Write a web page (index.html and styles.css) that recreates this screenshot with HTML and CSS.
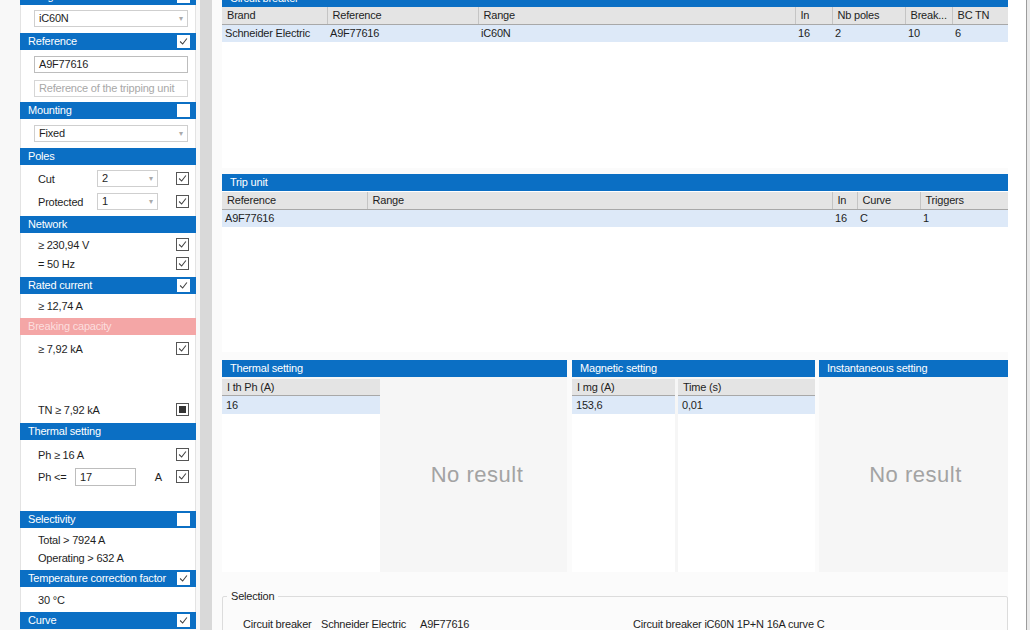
FILE: index.html
```html
<!DOCTYPE html>
<html lang="en">
<head>
    <meta charset="UTF-8">
    <title>Circuit breaker selection</title>
    <link rel="stylesheet" href="styles.css">
</head>
<body>
    <div class="sidebar">
        <div class="sec-head">Range<span class="cb white"></span></div>
        <div class="sec-body b-range">
            <div class="combo">iC60N<span class="arrow">&#9662;</span></div>
        </div>

        <div class="sec-head">Reference<span class="cb white checked"><svg viewBox="0 0 13 13"><polyline points="2.5,6.5 5.5,9.5 10.5,3"/></svg></span></div>
        <div class="sec-body b-ref">
            <div class="text-input">A9F77616</div>
            <div class="text-input placeholder">Reference of the tripping unit</div>
        </div>

        <div class="sec-head">Mounting<span class="cb white"></span></div>
        <div class="sec-body b-mount">
            <div class="combo">Fixed<span class="arrow">&#9662;</span></div>
        </div>

        <div class="sec-head">Poles</div>
        <div class="sec-body b-poles">
            <div class="pole-row">
                <span class="pole-label">Cut</span>
                <div class="combo small">2<span class="arrow">&#9662;</span></div>
                <span class="cb"><svg viewBox="0 0 13 13"><polyline points="2.5,6.5 5.5,9.5 10.5,3"/></svg></span>
            </div>
            <div class="pole-row">
                <span class="pole-label">Protected</span>
                <div class="combo small">1<span class="arrow">&#9662;</span></div>
                <span class="cb"><svg viewBox="0 0 13 13"><polyline points="2.5,6.5 5.5,9.5 10.5,3"/></svg></span>
            </div>
        </div>

        <div class="sec-head">Network</div>
        <div class="sec-body b-network">
            <div class="row">&ge; 230,94 V<span class="cb"><svg viewBox="0 0 13 13"><polyline points="2.5,6.5 5.5,9.5 10.5,3"/></svg></span></div>
            <div class="row">= 50 Hz<span class="cb"><svg viewBox="0 0 13 13"><polyline points="2.5,6.5 5.5,9.5 10.5,3"/></svg></span></div>
        </div>

        <div class="sec-head">Rated current<span class="cb white checked"><svg viewBox="0 0 13 13"><polyline points="2.5,6.5 5.5,9.5 10.5,3"/></svg></span></div>
        <div class="sec-body b-rated">
            <div class="row">&ge; 12,74 A</div>
        </div>

        <div class="sec-head warn">Breaking capacity</div>
        <div class="sec-body b-breaking">
            <div class="row">&ge; 7,92 kA<span class="cb"><svg viewBox="0 0 13 13"><polyline points="2.5,6.5 5.5,9.5 10.5,3"/></svg></span></div>
            <div class="row tn">TN &ge; 7,92 kA<span class="cb mixed"><i></i></span></div>
        </div>

        <div class="sec-head">Thermal setting</div>
        <div class="sec-body b-thermal">
            <div class="row">Ph &ge; 16 A<span class="cb"><svg viewBox="0 0 13 13"><polyline points="2.5,6.5 5.5,9.5 10.5,3"/></svg></span></div>
            <div class="row ph-max">
                <span class="pole-label short">Ph &lt;=</span>
                <div class="text-input num">17</div>
                <span class="unit">A</span>
                <span class="cb"><svg viewBox="0 0 13 13"><polyline points="2.5,6.5 5.5,9.5 10.5,3"/></svg></span>
            </div>
        </div>

        <div class="sec-head">Selectivity<span class="cb white"></span></div>
        <div class="sec-body b-select">
            <div class="row tight">Total &gt; 7924 A</div>
            <div class="row tight">Operating &gt; 632 A</div>
        </div>

        <div class="sec-head">Temperature correction factor<span class="cb white checked"><svg viewBox="0 0 13 13"><polyline points="2.5,6.5 5.5,9.5 10.5,3"/></svg></span></div>
        <div class="sec-body b-temp">
            <div class="row tight">30 &deg;C</div>
        </div>

        <div class="sec-head">Curve<span class="cb white checked"><svg viewBox="0 0 13 13"><polyline points="2.5,6.5 5.5,9.5 10.5,3"/></svg></span></div>
    </div>

    <div class="splitter"></div>

    <div class="main">
        <div class="grid-box top-grid">
            <div class="grid-title">Circuit breaker</div>
            <table class="grid">
                <colgroup>
                    <col class="c105"><col class="c151"><col class="c317"><col class="c37"><col class="c73"><col class="c47"><col>
                </colgroup>
                <tr><th>Brand</th><th>Reference</th><th>Range</th><th>In</th><th>Nb poles</th><th>Break...</th><th>BC TN</th></tr>
                <tr><td>Schneider Electric</td><td>A9F77616</td><td>iC60N</td><td>16</td><td>2</td><td>10</td><td>6</td></tr>
            </table>
        </div>

        <div class="grid-box trip-grid">
            <div class="grid-title">Trip unit</div>
            <table class="grid">
                <colgroup>
                    <col class="c145"><col class="c465"><col class="c25"><col class="c63"><col>
                </colgroup>
                <tr><th>Reference</th><th>Range</th><th>In</th><th>Curve</th><th>Triggers</th></tr>
                <tr><td>A9F77616</td><td></td><td>16</td><td>C</td><td>1</td></tr>
            </table>
        </div>

        <div class="settings">
            <div class="panel thermal">
                <div class="grid-title">Thermal setting</div>
                <div class="panel-body">
                    <div class="col w158">
                        <div class="col-head">I th Ph (A)</div>
                        <div class="col-cell">16</div>
                    </div>
                    <div class="no-result">No result</div>
                </div>
            </div>
            <div class="panel magnetic">
                <div class="grid-title">Magnetic setting</div>
                <div class="panel-body">
                    <div class="col w103">
                        <div class="col-head">I mg (A)</div>
                        <div class="col-cell">153,6</div>
                    </div>
                    <div class="col grow">
                        <div class="col-head">Time (s)</div>
                        <div class="col-cell">0,01</div>
                    </div>
                </div>
            </div>
            <div class="panel instant">
                <div class="grid-title">Instantaneous setting</div>
                <div class="panel-body">
                    <div class="no-result">No result</div>
                </div>
            </div>
        </div>

        <fieldset class="selection">
            <legend>Selection</legend>
            <div class="sel-row">
                <span>Circuit breaker</span>
                <span>Schneider Electric</span>
                <span>A9F77616</span>
                <span>Circuit breaker iC60N 1P+N 16A curve C</span>
            </div>
        </fieldset>
    </div>

    <div class="right-edge"></div>
</body>
</html>
```

FILE: styles.css
```css
* { box-sizing: border-box; }
body { margin: 0; width: 1030px; height: 630px; overflow: hidden; display: flex; font-family: "Liberation Sans", Arial, sans-serif; font-size: 11px; letter-spacing: -0.2px; color: #1e1e1e; background: #fbfbfb; }

/* left filter panel */
.sidebar { width: 200px; flex: none; padding: 0 4px 0 20px; margin-top: -12px; background: #f8f8f8; }
.sec-head { height: 17px; line-height: 17px; padding: 0 6px 0 8px; background: #0b6fc4; color: #fff; display: flex; justify-content: space-between; align-items: center; white-space: nowrap; }
.sec-head.warn { background: #f4a6a6; color: #fcdede; }
.sec-body { background: #fff; border-left: 1px solid #e3e3e3; border-right: 1px solid #e3e3e3; }
.b-range { padding: 5px 7px 6px 13px; height: 28px; }
.b-ref { padding: 6px 7px 0 13px; height: 52px; }
.b-ref .text-input + .text-input { margin-top: 7px; }
.b-mount { padding: 6px 7px 0 13px; height: 29px; }
.b-poles { padding: 5px 0 0 17px; height: 51px; }
.b-network { padding: 2px 0 0 17px; height: 44px; }
.b-rated { padding: 2px 0 0 17px; height: 24px; }
.b-breaking { padding: 4px 0 0 17px; height: 88px; }
.b-breaking .tn { margin-top: 42px; }
.b-thermal { padding: 5px 0 0 17px; height: 71px; }
.b-thermal .ph-max { margin-top: 3px; }
.b-select { padding: 3px 0 0 17px; height: 42px; }
.b-temp { padding: 4px 0 0 17px; height: 25px; }

.row { height: 19px; display: flex; align-items: center; justify-content: space-between; padding-right: 6px; }
.row.tight { height: 18px; }
.pole-row { height: 17px; display: flex; align-items: center; padding-right: 6px; }
.pole-row + .pole-row { margin-top: 6px; }
.pole-label { width: 60px; }
.pole-label.short { width: 37px; }

.combo { height: 17px; line-height: 15px; border: 1px solid #cfcfcf; background: #fff; padding: 0 4px; display: flex; justify-content: space-between; }
.combo.small { width: 62px; margin-right: 18px; }
.arrow { color: #aaa; font-size: 8px; }
.text-input { height: 17px; line-height: 15px; border: 1px solid #bdbdbd; background: #fff; padding: 0 4px; }
.text-input.placeholder { color: #a8a8a8; border-color: #d6d6d6; }
.text-input.num { width: 61px; height: 18px; line-height: 16px; }
.unit { margin-left: auto; margin-right: 14px; }

.cb { width: 13px; height: 13px; border: 1px solid #555; background: #fff; display: inline-flex; align-items: center; justify-content: center; flex: none; }
.cb.white { border-color: #fff; }
.cb svg { width: 13px; height: 13px; fill: none; stroke: #444; stroke-width: 1.3; }
.cb.mixed i { width: 7px; height: 7px; background: #333; }

.splitter { width: 12px; flex: none; background: #d9d9d9; }

/* main result area */
.main { width: 786px; flex: none; margin-left: 10px; }
.grid-box { background: #fff; }
.top-grid { margin-top: -10px; height: 178px; }
.trip-grid { margin-top: 6px; height: 178px; }
.grid-title { height: 17px; line-height: 17px; padding-left: 8px; background: #0b6fc4; color: #fff; white-space: nowrap; }
.trip-grid .grid-title { margin-bottom: 1px; }
.grid { width: 100%; border-collapse: collapse; table-layout: fixed; }
.grid th { height: 17px; padding: 0 5px; background: #e4e4e4; font-weight: normal; text-align: left; border-right: 1px solid #c4c4c4; border-bottom: 1px solid #a8a8a8; }
.grid th:last-child { border-right: none; }
.grid td { height: 18px; padding: 0 3px; background: #dde9f8; white-space: nowrap; overflow: hidden; }
.c105 { width: 105px; } .c151 { width: 151px; } .c317 { width: 317px; } .c37 { width: 37px; } .c73 { width: 73px; } .c47 { width: 47px; }
.c145 { width: 145px; } .c465 { width: 465px; } .c25 { width: 25px; } .c63 { width: 63px; }

.settings { margin-top: 8px; height: 212px; display: flex; gap: 4px; }
.panel { display: flex; flex-direction: column; }
.thermal { width: 345px; margin-right: 1px; }
.magnetic { width: 243px; }
.instant { flex: 1; }
.panel-body { flex: 1; display: flex; gap: 3px; padding-top: 2px; background: #f6f6f6; }
.col { display: flex; flex-direction: column; background: #fff; }
.col.w158 { width: 158px; }
.col.w103 { width: 103px; }
.col.grow { flex: 1; }
.col-head { height: 17px; line-height: 17px; padding-left: 5px; background: #e4e4e4; border-bottom: 1px solid #a8a8a8; }
.col-cell { height: 18px; line-height: 18px; padding-left: 4px; background: #dde9f8; }
.no-result { flex: 1; display: flex; align-items: center; justify-content: center; padding-bottom: 2px; padding-left: 4px; font-size: 22px; letter-spacing: 0.5px; color: #a3a3a3; }

.selection { margin: 18px 0 0; padding: 16px 0 0 0; height: 60px; border: 1px solid #dcdcdc; border-radius: 2px; }
.selection legend { margin-left: 4px; padding: 0 4px; }
.sel-row { display: grid; grid-template-columns: 78px 99px 213px auto; margin-left: 20px; }

.right-edge { flex: 1; background: #fff; border-right: 3px solid #eaeaea; box-shadow: inset -1px 0 0 #9c9c9c; }
```
